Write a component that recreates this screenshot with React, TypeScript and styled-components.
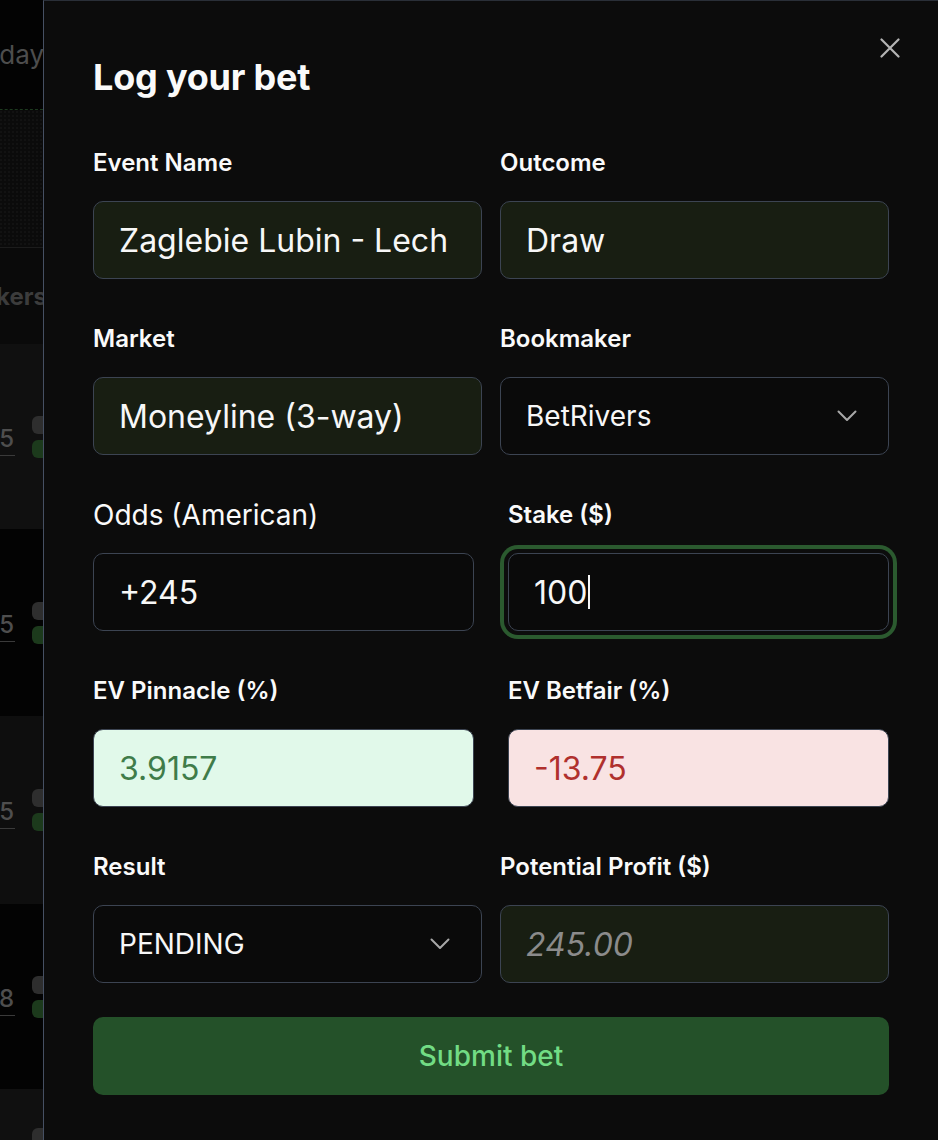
import React from "react";
import styled, { createGlobalStyle, css } from "styled-components";

const Global = createGlobalStyle`
  html, body { margin: 0; padding: 0; background: #000; }
  body { font-family: Inter, "Noto Sans", sans-serif; -webkit-font-smoothing: antialiased; }
  * { box-sizing: border-box; }
`;

const Screen = styled.div`
  display: flex;
  width: 938px;
  height: 1140px;
  overflow: hidden;
`;

/* ---------- background page (dimmed, clipped by the sheet) ---------- */
const Backdrop = styled.div`
  width: 43px;
  flex: none;
  overflow: hidden;
  display: flex;
  flex-direction: column;
  background: #030303;
`;

const BackInner = styled.div`
  width: 200px;
  margin-left: -157px;
  display: flex;
  flex-direction: column;
`;

const BackHeader = styled.div`
  height: 110px;
  display: flex;
  align-items: center;
  justify-content: flex-start;
  padding-left: 126px;
  color: #4d4d4d;
  font-size: 26px;
  white-space: nowrap;
  border-bottom: 1px dashed #1d3a1f;
`;

const BackDots = styled.div<{ $h: number; $bg: string }>`
  height: ${(p) => p.$h}px;
  background-color: ${(p) => p.$bg};
  background-image: radial-gradient(#1a1a1a 0.6px, transparent 0.8px);
  background-size: 4px 4px;
  border-bottom: 1px solid #1c1c1c;
`;

const BackTitle = styled.div`
  height: 96px;
  display: flex;
  align-items: center;
  justify-content: flex-start;
  padding-left: 58px;
  white-space: nowrap;
  color: #3c3c3c;
  font-size: 24px;
  font-weight: 700;
  background: #0a0a0a;
`;

const BackRow = styled.div<{ $h: number; $bg: string }>`
  height: ${(p) => p.$h}px;
  background: ${(p) => p.$bg};
  display: flex;
  align-items: center;
  justify-content: flex-end;
  gap: 17px;
  margin-right: -13px;
`;

const BackNum = styled.div`
  color: #4e4e4e;
  font-size: 24px;
  font-weight: 500;
  border-bottom: 1px solid #3a3a3a;
  padding: 0 1px 2px 0;
  margin-top: 6px;
`;

const BackBadges = styled.div`
  display: flex;
  flex-direction: column;
  gap: 6px;
  width: 24px;
`;

const BackBadge = styled.div<{ $green?: boolean }>`
  width: 24px;
  height: 18px;
  border-radius: 6px;
  background: ${(p) => (p.$green ? "#1c3a1c" : "#2e2e2e")};
`;

/* ---------- sheet ---------- */
const Sheet = styled.section`
  flex: 1;
  position: relative;
  background: #0c0c0c;
  border-left: 1px solid #465063;
  border-top: 1px solid #2a2f38;
  padding: 56px 49px 0 49px;
`;

const Close = styled.button`
  position: absolute;
  top: 35px;
  right: 36px;
  width: 24px;
  height: 24px;
  padding: 0;
  border: none;
  background: transparent;
  display: flex;
  align-items: center;
  justify-content: center;
  color: #b4b4b4;
`;

const Title = styled.h2`
  margin: 0 0 52px;
  color: #fafafa;
  font-size: 36px;
  line-height: 40px;
  font-weight: 700;
  letter-spacing: -0.2px;
`;

const Form = styled.div`
  display: grid;
  grid-template-columns: 1fr 1fr;
  column-gap: 18px;
  row-gap: 46px;
`;

const Field = styled.div<{ $inset?: "left" | "right" }>`
  display: flex;
  flex-direction: column;
  gap: 24px;
  ${(p) => p.$inset === "left" && css`padding-right: 8px;`}
  ${(p) => p.$inset === "right" && css`padding-left: 8px;`}
`;

const Label = styled.label<{ $plain?: boolean }>`
  color: #fafafa;
  font-size: 24px;
  line-height: 28px;
  font-weight: 600;
  ${(p) =>
    p.$plain &&
    css`
      font-size: 28px;
      font-weight: 400;
    `}
`;

type Tone = "olive" | "dark" | "mint" | "rose";

const toneBg: Record<Tone, string> = {
  olive: "#181e12",
  dark: "#0a0a0a",
  mint: "#e1f9ea",
  rose: "#f9e3e3",
};

const Box = styled.div<{ $tone: Tone; $focus?: boolean }>`
  position: relative;
  height: 78px;
  border-radius: 10px;
  border: 1.5px solid #3c4452;
  background: ${(p) => toneBg[p.$tone]};
  display: flex;
  align-items: center;
  padding: 0 25px;
  ${(p) =>
    p.$focus &&
    css`
      box-shadow: 0 0 0 4px #0c0c0c, 0 0 0 8px #2b5a2f;
    `}
`;

const Value = styled.span<{ $size?: number; $color?: string; $italic?: boolean }>`
  font-size: ${(p) => p.$size ?? 32}px;
  color: ${(p) => p.$color ?? "#f7f7f7"};
  font-style: ${(p) => (p.$italic ? "italic" : "normal")};
  white-space: nowrap;
  display: flex;
  align-items: center;
`;

const Caret = styled.span`
  display: inline-block;
  width: 1.5px;
  height: 34px;
  margin-left: 1px;
  background: #f5f5f5;
`;

const Chevron = styled.svg`
  position: absolute;
  right: 31px;
  top: 50%;
  transform: translateY(-50%);
`;

const Submit = styled.button`
  margin-top: 34px;
  width: 100%;
  height: 78px;
  border: none;
  border-radius: 10px;
  background: #245129;
  color: #72dc84;
  font-family: inherit;
  font-size: 28px;
  font-weight: 500;
`;

const ChevronIcon = () => (
  <Chevron width="20" height="12" viewBox="0 0 20 12" fill="none">
    <path d="M1.5 1.5l8.5 8.5 8.5-8.5" stroke="#a8a8a8" strokeWidth="2" strokeLinecap="round" strokeLinejoin="round" />
  </Chevron>
);

const rows: Array<{ h: number; bg: string; n: string }> = [
  { h: 185, bg: "#101010", n: "5" },
  { h: 187, bg: "#030303", n: "5" },
  { h: 188, bg: "#0e0e0e", n: "5" },
  { h: 185, bg: "#030303", n: "8" },
  { h: 120, bg: "#101010", n: "5" },
];

export default function App() {
  return (
    <>
      <Global />
      <Screen>
        <Backdrop>
          <BackInner>
            <BackHeader>Today</BackHeader>
            <BackDots $h={138} $bg="#0b0b0b" />
            <BackTitle>Bookmakers</BackTitle>
            {rows.map((r, i) => (
              <BackRow key={i} $h={r.h} $bg={r.bg}>
                <BackNum>{r.n}</BackNum>
                <BackBadges>
                  <BackBadge />
                  <BackBadge $green />
                </BackBadges>
              </BackRow>
            ))}
          </BackInner>
        </Backdrop>

        <Sheet>
          <Close aria-label="Close">
            <svg width="20" height="20" viewBox="0 0 20 20" fill="none">
              <path d="M1.5 1.5l17 17M18.5 1.5l-17 17" stroke="currentColor" strokeWidth="2.2" strokeLinecap="round" />
            </svg>
          </Close>
          <Title>Log your bet</Title>
          <Form>
            <Field>
              <Label>Event Name</Label>
              <Box $tone="olive">
                <Value>Zaglebie Lubin - Lech</Value>
              </Box>
            </Field>
            <Field>
              <Label>Outcome</Label>
              <Box $tone="olive">
                <Value>Draw</Value>
              </Box>
            </Field>

            <Field>
              <Label>Market</Label>
              <Box $tone="olive">
                <Value>Moneyline (3-way)</Value>
              </Box>
            </Field>
            <Field>
              <Label>Bookmaker</Label>
              <Box $tone="dark">
                <Value $size={28}>BetRivers</Value>
                <ChevronIcon />
              </Box>
            </Field>

            <Field $inset="left">
              <Label $plain>Odds (American)</Label>
              <Box $tone="dark">
                <Value>+245</Value>
              </Box>
            </Field>
            <Field $inset="right">
              <Label>Stake ($)</Label>
              <Box $tone="dark" $focus>
                <Value>
                  100
                  <Caret />
                </Value>
              </Box>
            </Field>

            <Field $inset="left">
              <Label>EV Pinnacle (%)</Label>
              <Box $tone="mint">
                <Value $color="#3f7c49">3.9157</Value>
              </Box>
            </Field>
            <Field $inset="right">
              <Label>EV Betfair (%)</Label>
              <Box $tone="rose">
                <Value $color="#b0302d">-13.75</Value>
              </Box>
            </Field>

            <Field>
              <Label>Result</Label>
              <Box $tone="dark">
                <Value $size={28}>PENDING</Value>
                <ChevronIcon />
              </Box>
            </Field>
            <Field>
              <Label>Potential Profit ($)</Label>
              <Box $tone="olive">
                <Value $italic $color="#8b8b8b">245.00</Value>
              </Box>
            </Field>
          </Form>
          <Submit>Submit bet</Submit>
        </Sheet>
      </Screen>
    </>
  );
}
